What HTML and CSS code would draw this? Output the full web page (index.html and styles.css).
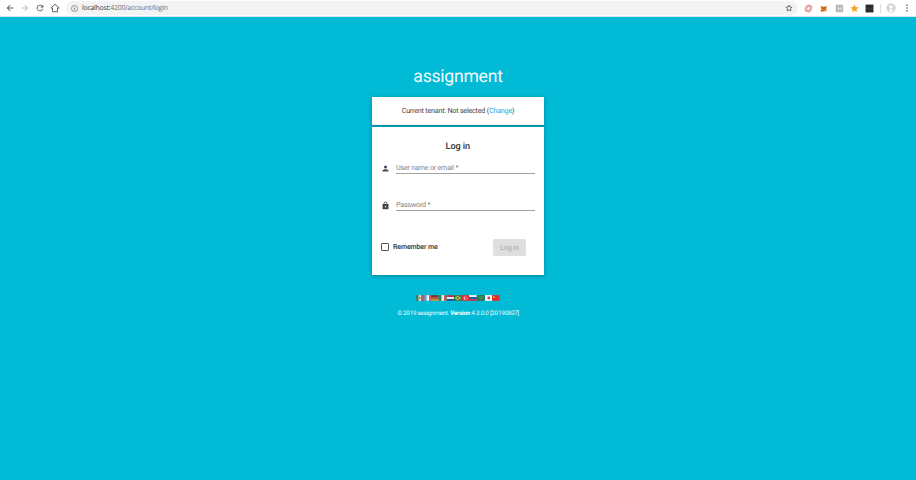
FILE: index.html
```html
<!DOCTYPE html>
<html lang="en">
<head>
<meta charset="utf-8">
<title>assignment</title>
<link rel="stylesheet" href="styles.css">
</head>
<body>
<header class="toolbar">
  <svg class="nav" viewBox="0 0 24 24"><path d="M20 11H7.800l5.600-5.600L12 4l-8 8 8 8 1.400-1.400L7.800 13H20z"/></svg>
  <svg class="nav off" viewBox="0 0 24 24"><path d="M4 11h12.200l-5.600-5.600L12 4l8 8-8 8-1.400-1.400 5.600-5.600H4z"/></svg>
  <svg class="nav" viewBox="0 0 24 24"><path d="M17.650 6.350A8 8 0 1 0 19.730 14h-2.080A6 6 0 1 1 12 6c1.660 0 3.140.69 4.220 1.780L13 11h7V4z"/></svg>
  <svg class="nav home" viewBox="0 0 24 24"><path d="M2 12l10-9 10 9h-4v9H6v-9z" fill="none" stroke="#555" stroke-width="2.200"/></svg>
  <div class="address">
    <svg class="info" viewBox="0 0 16 16"><circle cx="8" cy="8" r="7" fill="none" stroke="#60646a" stroke-width="1.500"/><path d="M7.200 7h1.600v4.500H7.200zM7.200 4.300h1.600v1.500H7.200z"/></svg>
    <span class="url"><span class="host">localhost:</span>4200/account/login</span>
    <svg class="bookmark" viewBox="0 0 24 24"><path d="M12 3l2.700 6.100 6.600.6-5 4.400 1.500 6.500-5.800-3.400-5.800 3.400 1.500-6.500-5-4.400 6.600-.6z" fill="none" stroke="#4c5055" stroke-width="2.300"/></svg>
  </div>
  <div class="extensions">
    <svg viewBox="0 0 16 16"><g fill="none" stroke="#e5737a" stroke-width="1.200"><circle cx="8" cy="8" r="5.800"/><ellipse cx="8" cy="8" rx="7" ry="2.800" transform="rotate(-35 8 8)"/><ellipse cx="8" cy="8" rx="3" ry="6.500"/></g></svg>
    <svg viewBox="0 0 16 16"><path d="M3 3l4 2h3l4-2-1 7 1 3-5-1H7l-4 2 1-4z" fill="#e8791d"/><path d="M5 5l3 2 3-2-1 3H7zM3 12h3l2-1 3 2H3z" fill="#71411d"/></svg>
    <svg viewBox="0 0 16 16"><rect x="1.500" y="1.500" width="13" height="13" rx="1" fill="#b6b6b6"/><path d="M6 4v8M6 8h5V4M11 8v4" fill="none" stroke="#eee" stroke-width="1.300"/></svg>
    <svg viewBox="0 0 16 16"><path d="M8 1l2.300 4.500 5 .6-3.800 3.300 1.200 5L8 12l-4.700 2.400 1.200-5L.7 6.100l5-.6z" fill="#f4a529"/></svg>
    <svg viewBox="0 0 16 16"><rect x="1" y="1" width="14" height="14" fill="#292b30"/><path d="M3 9l3-1 2 2 2-2 3 1" fill="none" stroke="#585a60"/></svg>
  </div>
  <span class="divider"></span>
  <svg class="avatar" viewBox="0 0 16 16"><circle cx="8" cy="8" r="7.500" fill="#d3d5d7"/><circle cx="8" cy="6.300" r="2.800" fill="#fff"/><path d="M5 12q3-4 6 0v2H5z" fill="#fff"/></svg>
  <svg class="more" viewBox="0 0 4 16"><circle cx="2" cy="2.500" r="1.600"/><circle cx="2" cy="8" r="1.600"/><circle cx="2" cy="13.500" r="1.600"/></svg>
</header>
<main>
  <h1>assignment</h1>
  <section class="card tenant"><span>Current tenant: Not selected (<a>Change</a>)</span></section>
  <section class="card login">
    <h2>Log in</h2>
    <div class="field">
      <svg viewBox="0 0 24 24"><path d="M12 12a4 4 0 1 0 0-8 4 4 0 0 0 0 8zm0 2c-2.670 0-8 1.340-8 4v2h16v-2c0-2.660-5.330-4-8-4z"/></svg>
      <label>User name or email *</label>
    </div>
    <div class="field password">
      <svg viewBox="0 0 24 24"><path fill-rule="evenodd" d="M18 8h-1V6A5 5 0 0 0 7 6v2H6a2 2 0 0 0-2 2v10a2 2 0 0 0 2 2h12a2 2 0 0 0 2-2V10a2 2 0 0 0-2-2zM9 6a3 3 0 0 1 6 0v2H9zm3 11a2 2 0 1 1 0-4 2 2 0 0 1 0 4z"/></svg>
      <label>Password *</label>
    </div>
    <div class="actions">
      <span class="checkbox"></span><span class="remember">Remember me</span>
      <button disabled>Log in</button>
    </div>
  </section>
  <div class="flags">
    <svg viewBox="0 0 12 9"><path fill="#397f68" d="M0 0h12v9H0z"/><path fill="#e5dcd0" d="M4 0h4v9H4z"/><path fill="#b96065" d="M8 0h4v9H8z"/><path fill="#6c7950" d="M5 3h2v3H5z"/></svg>
    <svg viewBox="0 0 12 9"><path fill="#7790c5" d="M0 0h4v9H0z"/><path fill="#f1eef2" d="M4 0h4v9H4z"/><path fill="#e75161" d="M8 0h4v9H8z"/></svg>
    <svg viewBox="0 0 12 9"><path fill="#6c4038" d="M0 0h12v3H0z"/><path fill="#d34632" d="M0 3h12v3H0z"/><path fill="#b89636" d="M0 6h12v3H0z"/></svg>
    <svg viewBox="0 0 12 9"><path fill="#278c51" d="M0 0h4v9H0z"/><path fill="#f5f3ee" d="M4 0h4v9H4z"/><path fill="#d95042" d="M8 0h4v9H8z"/></svg>
    <svg viewBox="0 0 12 9"><path fill="#bd304c" d="M0 0h12v3H0z"/><path fill="#f5f4f7" d="M0 3h12v3H0z"/><path fill="#294d9a" d="M0 6h12v3H0z"/></svg>
    <svg viewBox="0 0 12 9"><path fill="#287b42" d="M0 0h12v9H0z"/><path fill="#e3cf43" d="M6 1l5 3.500L6 8 1 4.500z"/><circle cx="6" cy="4.500" r="1.700" fill="#315785"/></svg>
    <svg viewBox="0 0 12 9"><path fill="#df3039" d="M0 0h12v9H0z"/><circle cx="5" cy="4.500" r="2.400" fill="#fff"/><circle cx="5.800" cy="4.500" r="1.800" fill="#df3039"/><circle cx="8" cy="4.500" r=".8" fill="#fff"/></svg>
    <svg viewBox="0 0 12 9"><path fill="#f5f5f5" d="M0 0h12v3H0z"/><path fill="#2455a7" d="M0 3h12v3H0z"/><path fill="#d53146" d="M0 6h12v3H0z"/></svg>
    <svg viewBox="0 0 12 9"><path fill="#28723f" d="M0 0h12v9H0z"/><path d="M2 3h8M3 6h6" stroke="#8bb28f"/></svg>
    <svg viewBox="0 0 12 9"><path fill="#fff" d="M0 0h12v9H0z"/><circle cx="6" cy="4.500" r="2.300" fill="#e13446"/></svg>
    <svg viewBox="0 0 12 9"><path fill="#dc2f2c" d="M0 0h12v9H0z"/><path d="M3 1l.6 1.200 1.400.1-1 1 .3 1.500L3 4l-1.300.8L2 3.300l-1-1 1.400-.1z" fill="#efb431"/></svg>
  </div>
  <footer>© 2019 assignment. <b>Version</b> 4.3.0.0 [20190807]</footer>
</main>
</body>
</html>
```
FILE: styles.css
```css
* { box-sizing: border-box; }
body { margin: 0; height: 480px; overflow: hidden; background: #00bad6; font-family: Roboto, "Liberation Sans", sans-serif; color: #454549; text-rendering: geometricPrecision; }
svg { display: block; flex: none; }
.toolbar { display: flex; align-items: center; height: 17px; padding-left: 5px; background: #fff; border-bottom: 1px solid #d9e5e7; fill: #555; }
.nav { width: 10px; height: 10px; margin-right: 5px; }
.off { fill: #b8babc; }
.home { margin-right: 6px; }
.address { display: flex; align-items: center; width: 732px; height: 14px; padding: 0 5px; border-radius: 7px; background: #f1f3f4; }
.info { width: 7px; height: 7px; margin-right: 4px; }
.url { padding-top: 2px; font: 6.900px/14px "Open Sans", sans-serif; letter-spacing: -.24px; color: #6c7074; white-space: nowrap; }
.host { color: #36393c; }
.bookmark { width: 8px; height: 8px; margin-left: auto; }
.extensions { display: flex; gap: 6.300px; margin-left: 6px; }
.extensions svg { width: 9px; height: 9px; }
.divider { width: 1px; height: 9px; margin: 0 5px 0 6px; background: #ddd; }
.avatar { width: 10px; height: 10px; }
.more { width: 2px; height: 8px; margin-left: 10px; }
main { display: flex; flex-direction: column; align-items: center; }
h1 { margin: 47px 0 0; height: 33px; font-size: 17.600px; letter-spacing: -.25px; line-height: 26px; font-weight: 400; color: #f1fcfe; }
.card { width: 172px; background: #fff; box-shadow: 0 1px 4px rgba(0, 0, 0, .28); }
.tenant { height: 29px; text-align: center; font-size: 7.200px; letter-spacing: -.22px; line-height: 27px; }
.tenant a { color: #28a8d8; }
.login { height: 149px; box-shadow: 0 -1px #008b9f, 0 1px 4px rgba(0, 0, 0, .28); border-top: 1px solid #06a0b5; padding: 12px 9.500px 0 9px; }
h2 { margin: 0; font-size: 9.200px; letter-spacing: -.15px; line-height: 15px; font-weight: 600; text-align: center; }
.field { display: flex; align-items: center; height: 13px; margin-top: 7px; fill: #454549; }
.field svg { width: 9px; height: 9px; margin: 1px 6px 0 0; }
.field label { flex: 1; height: 13px; border-bottom: 1px solid #a3a3a0; color: #858585; font-size: 7.200px; letter-spacing: -.23px; line-height: 13px; }
.password { margin-top: 24px; }
.actions { display: flex; align-items: center; margin-top: 28px; height: 17px; }
.checkbox { width: 8px; height: 8px; margin-top: -1px; border: 1px solid #555; border-radius: 1px; }
.remember { margin: -2px 0 0 4px; font-size: 7.100px; letter-spacing: -.18px; font-weight: 600; }
button { width: 33px; height: 17px; margin: 0 8.500px 0 auto; padding: 0; border: 0; border-radius: 2px; background: #dfdfdf; color: #b0b0b0; font: 500 7px Roboto, sans-serif; letter-spacing: -.1px; }
.flags { display: flex; margin-top: 20px; width: 84px; height: 6px; }
.flags svg { width: 7.636px; height: 6px; }
footer { margin-top: 7px; font-size: 6.200px; letter-spacing: -.22px; line-height: 10px; color: #eefcfd; white-space: nowrap; }
footer b { font-weight: 700; color: #f2ffff; }
```
